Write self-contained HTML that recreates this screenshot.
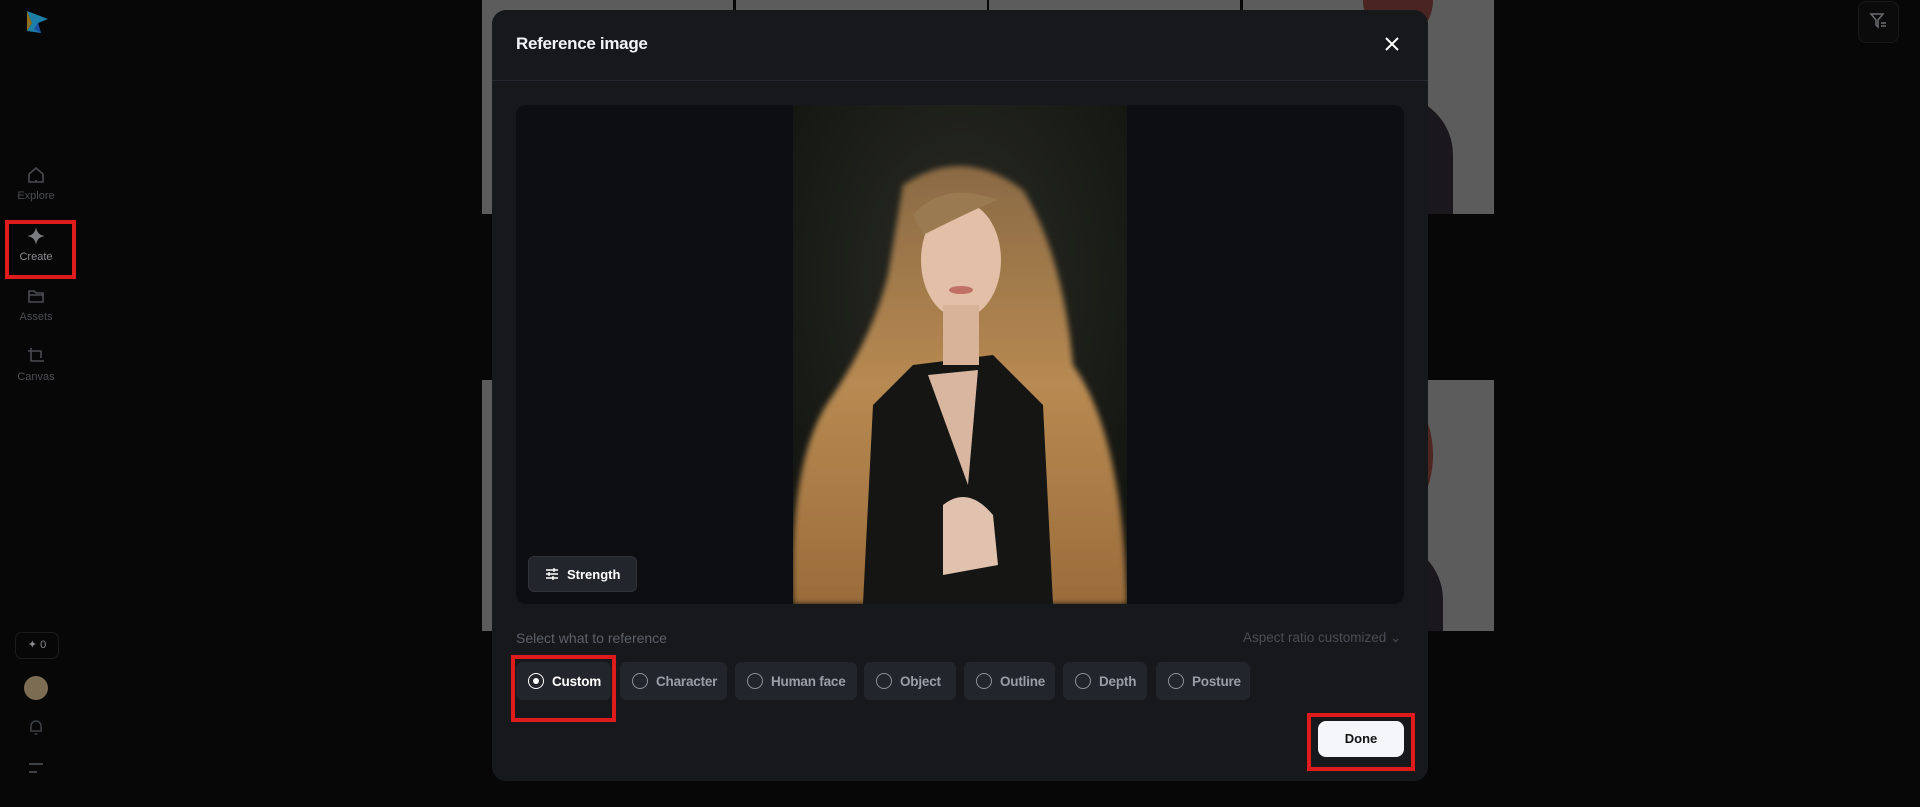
<!DOCTYPE html>
<html><head><meta charset="utf-8"><style>
*{box-sizing:border-box;margin:0;padding:0}
body{width:1920px;height:807px;background:#070707;overflow:hidden;position:relative;font-family:"Liberation Sans",sans-serif}
.abs{position:absolute}
.tile{position:absolute;background:#5c5c5c;overflow:hidden}
.nav{position:absolute;left:0;width:72px;text-align:center;color:#4a4c50;font-size:11px}
.nav svg{display:block;margin:0 auto 5px}
.chip{position:absolute;top:662px;height:38px;background:#22252b;border-radius:6px;color:#9a9ea6;font-size:13.5px;font-weight:bold;display:flex;align-items:center;padding-left:12px;gap:8px;letter-spacing:-0.2px}
.rad{width:16px;height:16px;border:1.5px solid #8d9199;border-radius:50%;flex:none;position:relative}
.red{position:absolute;border:4px solid #e01b1b}
</style></head><body>

<!-- background tiles -->
<div class="tile" style="left:482px;top:0;width:251px;height:214px"></div>
<div class="tile" style="left:736px;top:0;width:251px;height:214px"></div>
<div class="tile" style="left:989px;top:0;width:251px;height:214px"></div>
<div class="tile" style="left:1243px;top:0;width:251px;height:214px">
 <div class="abs" style="left:60px;top:95px;width:150px;height:200px;background:#1a181c;border-radius:0 60px 0 0"></div>
 <div class="abs" style="left:120px;top:-40px;width:70px;height:80px;background:#4a2420;border-radius:50%"></div>
</div>
<div class="tile" style="left:482px;top:380px;width:251px;height:251px"></div>
<div class="tile" style="left:1243px;top:380px;width:251px;height:251px">
 <div class="abs" style="left:110px;top:10px;width:80px;height:130px;background:#4e2520;border-radius:50%"></div>
 <div class="abs" style="left:60px;top:160px;width:140px;height:120px;background:#1a181c;border-radius:0 60px 0 0"></div>
</div>

<!-- sidebar -->
<svg class="abs" style="left:24px;top:9px" width="26" height="26" viewBox="0 0 26 26"><path d="M3 2 L24 10 L14 14 L17 24 L3 22 L8 14Z" fill="#1d7fa8"/><path d="M3 2 L8 14 L3 22Z" fill="#c89a2a" opacity=".7"/><path d="M14 14 L17 24 L10 20Z" fill="#1a4fa0"/></svg>
<div class="nav" style="top:165px"><svg width="20" height="20" viewBox="0 0 20 20" fill="none" stroke="#4a4c50" stroke-width="1.6"><path d="M3 9 L10 3 L17 9 V17 H3Z"/><path d="M10 17v-2"/></svg>Explore</div>
<div class="nav" style="top:226px;color:#8a8c90"><svg width="20" height="20" viewBox="0 0 20 20"><path d="M10 1 Q11 9 19 10 Q11 11 10 19 Q9 11 1 10 Q9 9 10 1Z" fill="#7a7c80"/></svg>Create</div>
<div class="nav" style="top:286px"><svg width="20" height="20" viewBox="0 0 20 20" fill="none" stroke="#4a4c50" stroke-width="1.6"><path d="M3 5 H8 L10 7 H17 V16 H3Z M3 9H17"/></svg>Assets</div>
<div class="nav" style="top:346px"><svg width="20" height="20" viewBox="0 0 20 20" fill="none" stroke="#4a4c50" stroke-width="1.6"><path d="M5 2V15H18M2 5H15V12"/></svg>Canvas</div>
<div class="red" style="left:5px;top:220px;width:71px;height:59px"></div>
<div class="abs" style="left:15px;top:632px;width:44px;height:27px;border:1px solid #1b1c1e;border-radius:7px;color:#8a8c90;font-size:11px;text-align:center;line-height:25px">✦ 0</div>
<div class="abs" style="left:24px;top:676px;width:24px;height:24px;border-radius:50%;background:#7c6c52"></div>
<svg class="abs" style="left:27px;top:718px" width="18" height="18" viewBox="0 0 18 18" fill="none" stroke="#3e4146" stroke-width="1.5"><path d="M4 13V8a5 5 0 0110 0v5H3h12M7.5 16h3"/></svg>
<svg class="abs" style="left:27px;top:761px" width="18" height="14" viewBox="0 0 18 14" stroke="#3e4146" stroke-width="2"><path d="M2 3H16M2 11H10"/></svg>
<div class="abs" style="left:1858px;top:1px;width:41px;height:42px;border:1px solid #18191b;border-radius:8px;background:#0b0b0c"></div>
<svg class="abs" style="left:1869px;top:11px" width="20" height="20" viewBox="0 0 20 20" fill="none" stroke="#6a6c70" stroke-width="1.5"><path d="M2 3H14L9 9V16L7 14V9Z M12 12H17M12 15H17"/></svg>

<!-- modal -->
<div class="abs" style="left:492px;top:10px;width:936px;height:771px;background:#16181c;border-radius:14px"></div>
<div class="abs" style="left:516px;top:34px;color:#f2f3f5;font-size:17px;font-weight:bold;letter-spacing:-0.3px">Reference image</div>
<svg class="abs" style="left:1384px;top:36px" width="16" height="16" viewBox="0 0 16 16" stroke="#fff" stroke-width="2"><path d="M2 2L14 14M14 2L2 14"/></svg>
<div class="abs" style="left:492px;top:80px;width:936px;height:1px;background:#262932"></div>
<div class="abs" style="left:516px;top:105px;width:888px;height:499px;background:#0d0e11;border-radius:10px;overflow:hidden">
 <svg class="abs" style="left:277px;top:0" width="334" height="499" viewBox="0 0 334 499">
  <defs>
   <radialGradient id="bg" cx=".5" cy=".35" r=".7"><stop offset="0" stop-color="#2a2b24"/><stop offset="1" stop-color="#121410"/></radialGradient>
   <linearGradient id="hair" x1="0" y1="0" x2="0" y2="1"><stop offset="0" stop-color="#8a6a44"/><stop offset=".5" stop-color="#b88a52"/><stop offset="1" stop-color="#9a6c3a"/></linearGradient>
   <filter id="b"><feGaussianBlur stdDeviation="3"/></filter>
  </defs>
  <rect width="334" height="499" fill="url(#bg)"/>
  <path d="M110 80 Q170 40 230 85 Q270 150 280 260 Q330 330 334 499 H0 Q-5 350 40 290 Q80 230 95 170Z" fill="url(#hair)" filter="url(#b)"/>
  <path d="M120 260 L200 250 L250 300 L260 499 H70 L80 300Z" fill="#151514"/>
  <path d="M135 270 L185 265 L175 380 Z" fill="#d9b6a0"/>
  <ellipse cx="168" cy="155" rx="40" ry="58" fill="#e2bfa6"/>
  <rect x="150" y="200" width="36" height="60" fill="#d8b39a"/>
  <path d="M120 110 Q150 75 205 95 Q190 100 130 130Z" fill="#9a7a50"/>
  <ellipse cx="168" cy="185" rx="12" ry="4" fill="#c07064"/>
  <path d="M150 400 Q175 380 200 410 L205 460 L150 470Z" fill="#e0c2ae"/>
 </svg>
 <div class="abs" style="left:12px;top:451px;width:109px;height:36px;background:#22252b;border:1px solid #30333a;border-radius:6px;color:#fff;font-size:13px;font-weight:bold;display:flex;align-items:center;padding-left:16px;gap:8px">
  <svg width="14" height="12" viewBox="0 0 14 12" stroke="#fff" stroke-width="1.4"><path d="M1 2H13M1 6H13M1 10H13M9 0V4M4 4V8M8 8V12"/></svg>Strength</div>
</div>
<div class="abs" style="left:516px;top:630px;color:#5c6067;font-size:14px">Select what to reference</div>
<div class="abs" style="left:1243px;top:630px;color:#4a4d53;font-size:13.5px">Aspect ratio customized ⌄</div>

<div class="chip" style="left:516px;width:95px;color:#fff"><span class="rad" style="border-color:#fff"><span class="abs" style="left:3.5px;top:3.5px;width:6px;height:6px;border-radius:50%;background:#fff"></span></span>Custom</div>
<div class="chip" style="left:620px;width:107px"><span class="rad"></span>Character</div>
<div class="chip" style="left:735px;width:122px"><span class="rad"></span>Human face</div>
<div class="chip" style="left:864px;width:92px"><span class="rad"></span>Object</div>
<div class="chip" style="left:964px;width:91px"><span class="rad"></span>Outline</div>
<div class="chip" style="left:1063px;width:84px"><span class="rad"></span>Depth</div>
<div class="chip" style="left:1156px;width:94px"><span class="rad"></span>Posture</div>
<div class="red" style="left:511px;top:655px;width:105px;height:67px"></div>

<div class="abs" style="left:1318px;top:721px;width:86px;height:36px;background:#f4f6fa;border-radius:8px;color:#111;font-size:13px;font-weight:bold;text-align:center;line-height:36px">Done</div>
<div class="red" style="left:1307px;top:713px;width:108px;height:58px"></div>
</body></html>
